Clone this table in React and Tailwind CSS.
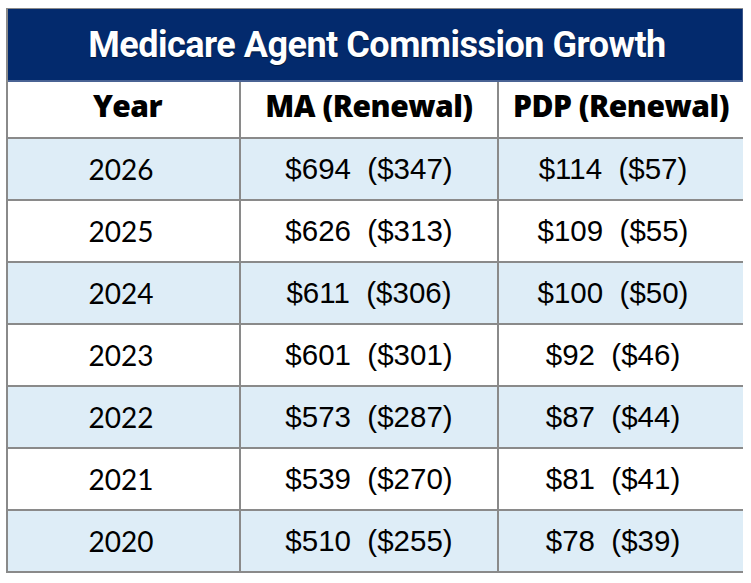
import React from "react";

const rows = [
  ["2026", "$694  ($347)", "$114  ($57)"],
  ["2025", "$626  ($313)", "$109  ($55)"],
  ["2024", "$611  ($306)", "$100  ($50)"],
  ["2023", "$601  ($301)", "$92  ($46)"],
  ["2022", "$573  ($287)", "$87  ($44)"],
  ["2021", "$539  ($270)", "$81  ($41)"],
  ["2020", "$510  ($255)", "$78  ($39)"],
];

export default function App() {
  return (
    <div className="w-[751px] h-[583px] bg-white pt-[8px] pl-[6px]">
      <div className="w-[737px] border-l-2 border-t border-[#8a8a8a]">
        <div className="h-[73px] bg-[#032a6d] border-r border-[#3a5488] border-b-2 border-b-[#4a6394] flex items-center justify-center">
          <span className="text-white text-[36px] font-bold tracking-[-0.5px] font-['Roboto',sans-serif] leading-none pl-[4px] [text-shadow:0_1px_1px_rgba(0,0,0,0.5)]">
            Medicare Agent Commission Growth
          </span>
        </div>
        <div className="grid grid-cols-[233px_258px_1fr] h-[57px] border-b-2 border-[#8a8a8a]">
          <div className="flex items-center justify-center border-r-2 border-[#8a8a8a] font-['Open_Sans',sans-serif] font-extrabold text-[30px] text-black pb-[8px] pl-[8px] tracking-[-0.5px]">
            Year
          </div>
          <div className="flex items-center justify-center border-r-2 border-[#8a8a8a] font-['Open_Sans',sans-serif] font-extrabold text-[30px] text-black pb-[8px] tracking-[-0.5px]">
            MA (Renewal)
          </div>
          <div className="flex items-center justify-center font-['Open_Sans',sans-serif] font-extrabold text-[30px] text-black pb-[8px] tracking-[-0.5px]">
            PDP (Renewal)
          </div>
        </div>
        {rows.map((r, i) => (
          <div
            key={r[0]}
            className={
              "grid grid-cols-[233px_258px_1fr] h-[62px] border-b-2 border-[#8a8a8a] " +
              (i % 2 === 0 ? "bg-[#deedf7]" : "bg-white")
            }
          >
            <div className="flex items-center justify-center border-r-2 border-[#8a8a8a] font-['Lato',sans-serif] text-[28px] text-black pr-[5px]">
              {r[0]}
            </div>
            <div className="flex items-center justify-center border-r-2 border-[#8a8a8a] font-['Liberation_Sans',sans-serif] text-[29.5px] text-black whitespace-pre">
              {r[1]}
            </div>
            <div className="flex items-center justify-center font-['Liberation_Sans',sans-serif] text-[29.5px] text-black whitespace-pre pr-[16px]">
              {r[2]}
            </div>
          </div>
        ))}
      </div>
    </div>
  );
}
